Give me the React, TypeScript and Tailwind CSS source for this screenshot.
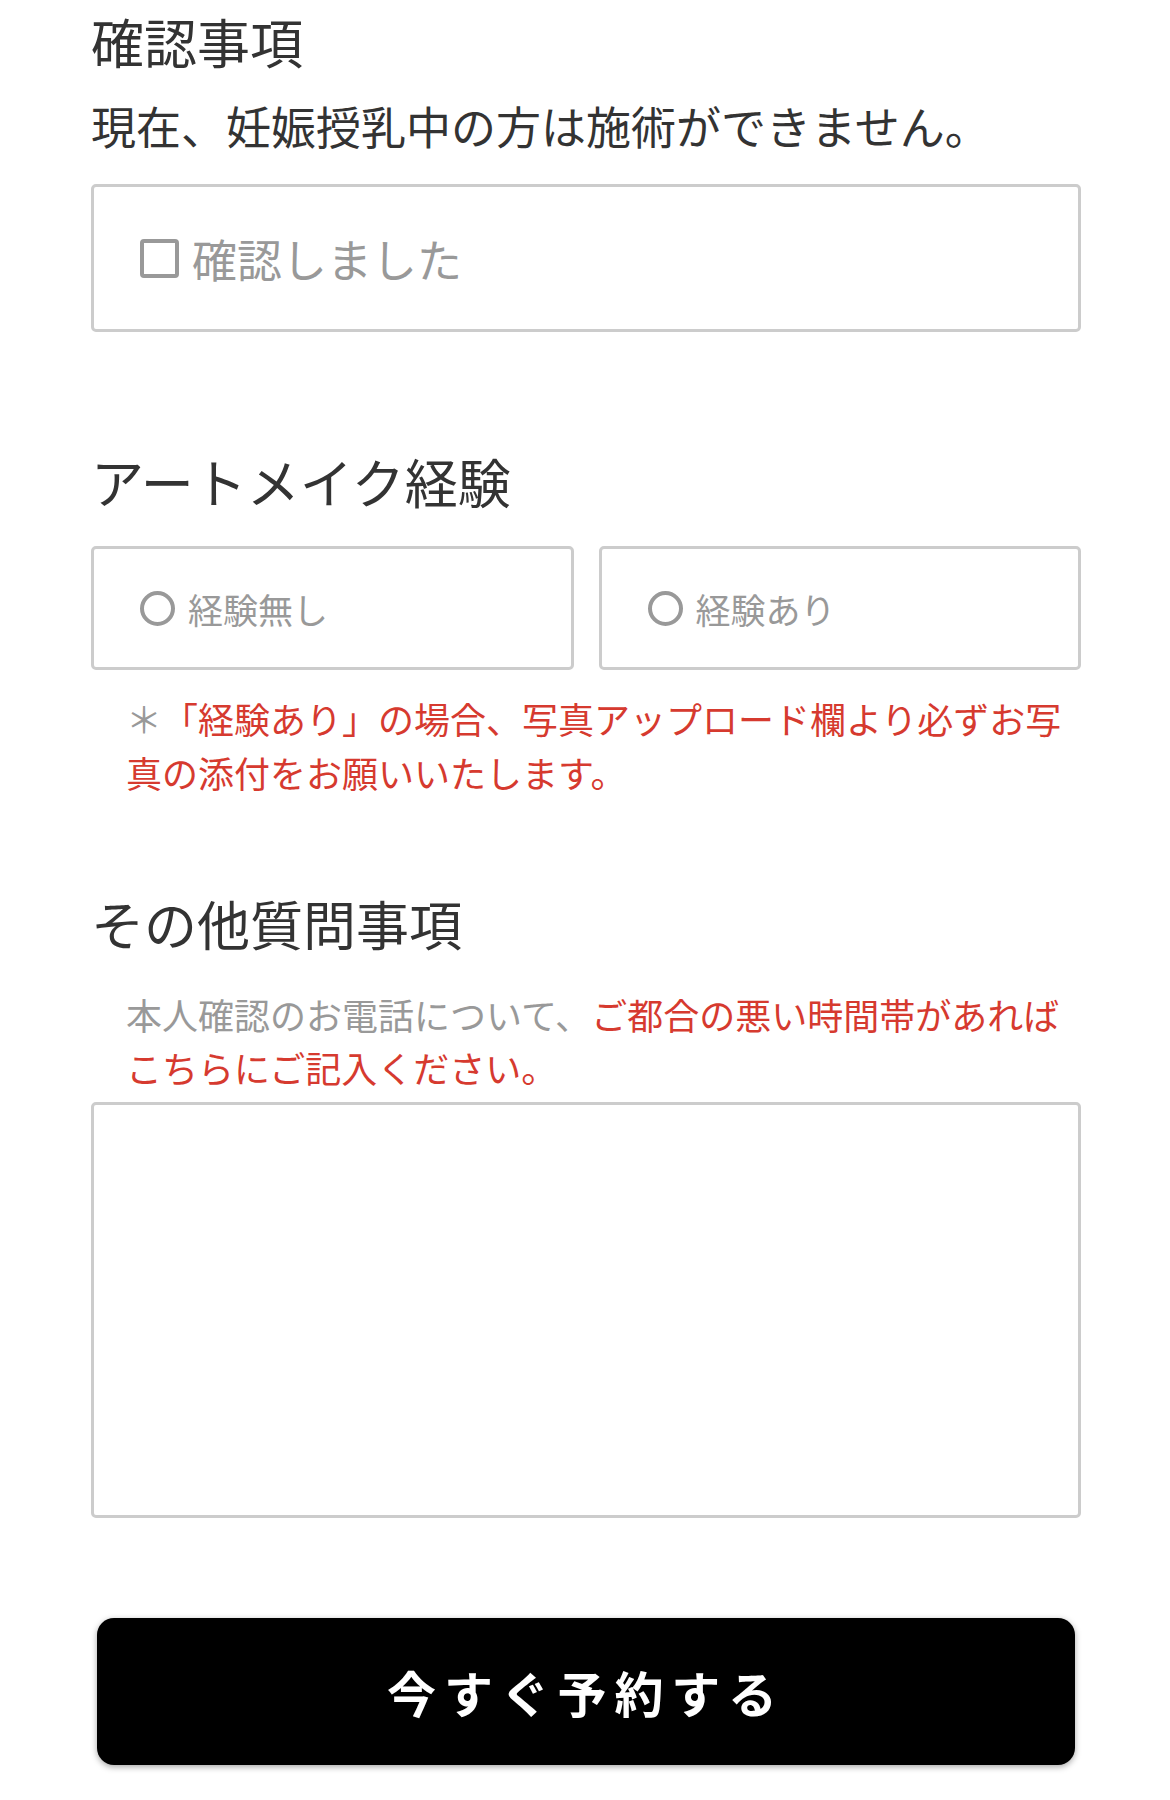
export default function App() {
  return (
    <div
      className="bg-white pb-[20px] pl-[91px] pr-[89px] pt-[10px] text-[#333333]"
      style={{ fontFamily: '"Noto Sans CJK JP", "Noto Sans", sans-serif' }}
    >
      {/* 確認事項 */}
      <h2 className="text-[53px] leading-[62px] font-normal">確認事項</h2>
      <p className="mt-[24px] text-[45px] leading-[60px]">
        現在、妊娠授乳中の方は施術ができません。
      </p>
      <label className="mt-[28px] flex h-[148px] w-full items-center gap-[13px] rounded-[5px] border-[3px] border-[#cccccc] pl-[46px]">
        <span className="size-[39px] shrink-0 rounded-[4px] border-[4px] border-[#999999] bg-white" />
        <span className="text-[45px] leading-none text-[#999999]">確認しました</span>
      </label>

      {/* アートメイク経験 */}
      <h2 className="mt-[118px] text-[53px] leading-[62px] font-normal">アートメイク経験</h2>
      <div className="mt-[34px] grid grid-cols-2 gap-[25px]">
        {["経験無し", "経験あり"].map((label) => (
          <label
            key={label}
            className="flex h-[124px] items-center gap-[13px] rounded-[5px] border-[3px] border-[#cccccc] pl-[46px]"
          >
            <span className="size-[35px] shrink-0 rounded-full border-[4px] border-[#999999] bg-white" />
            <span className="text-[35px] leading-none text-[#999999]">{label}</span>
          </label>
        ))}
      </div>
      <p className="mt-[21px] pl-[35px] text-[36px] leading-[54px] text-[#d63a2f]">
        <span className="text-[#999999]">＊</span>「経験あり」の場合、写真アップロード欄より必ずお写
        <br />
        真の添付をお願いいたします。
      </p>

      {/* その他質問事項 */}
      <h2 className="mt-[93px] text-[53px] leading-[62px] font-normal">その他質問事項</h2>
      <p className="mt-[34px] pl-[35px] text-[36px] leading-[53px] text-[#999999]">
        本人確認のお電話について、
        <span className="text-[#d63a2f]">ご都合の悪い時間帯があれば</span>
        <br />
        <span className="text-[#d63a2f]">こちらにご記入ください。</span>
      </p>
      <textarea className="mt-[8px] block h-[416px] w-full resize-none rounded-[5px] border-[3px] border-[#cccccc] p-4 text-[36px] outline-none" />

      <button
        type="button"
        className="mx-[6px] mt-[100px] flex h-[147px] w-[calc(100%-12px)] items-center justify-center rounded-[17px] bg-black text-[49px] font-bold tracking-[0.16em] text-white shadow-[0_2px_6px_rgba(0,0,0,0.35)]"
      >
        今すぐ予約する
      </button>
    </div>
  );
}
